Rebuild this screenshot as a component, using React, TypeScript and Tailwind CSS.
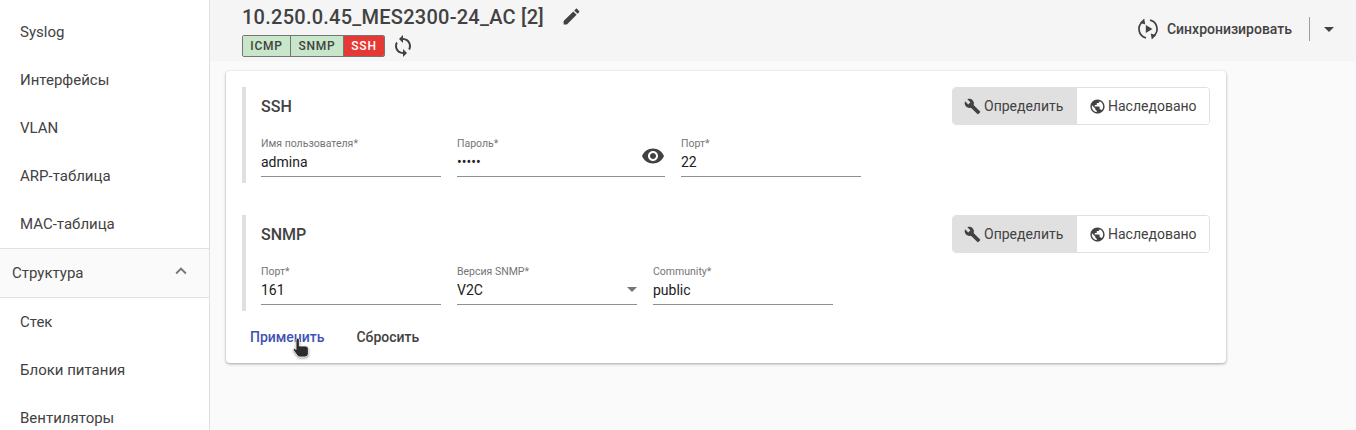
import React from "react";

const MI = ({ d, size = 24, className = "" }: { d: string; size?: number; className?: string }) => (
  <svg width={size} height={size} viewBox="0 0 24 24" fill="currentColor" className={`shrink-0 ${className}`}>
    <path d={d} />
  </svg>
);

const wrench = "M22.7 19l-9.1-9.1c.9-2.3.4-5-1.5-6.9-2-2-5-2.4-7.4-1.3L9 6 6 9 1.6 4.7C.4 7.1.9 10.1 2.9 12.1c1.9 1.9 4.6 2.4 6.9 1.5l9.1 9.1c.4.4 1 .4 1.4 0l2.3-2.3c.5-.4.5-1.1.1-1.4z";
const globe = "M12 2C6.48 2 2 6.48 2 12s4.48 10 10 10 10-4.48 10-10S17.52 2 12 2zm-1 17.93c-3.95-.49-7-3.85-7-7.93 0-.62.08-1.21.21-1.79L9 15v1c0 1.1.9 2 2 2v1.93zm6.9-2.54c-.26-.81-1-1.39-1.9-1.39h-1v-3c0-.55-.45-1-1-1H8v-2h2c.55 0 1-.45 1-1V7h2c1.1 0 2-.9 2-2v-.41c2.93 1.19 5 4.06 5 7.41 0 2.08-.8 3.97-2.1 5.39z";
const edit = "M3 17.25V21h3.75L17.81 9.94l-3.75-3.75L3 17.25zM20.71 7.04c.39-.39.39-1.02 0-1.41l-2.34-2.34c-.39-.39-1.02-.39-1.41 0l-1.83 1.83 3.75 3.75 1.83-1.83z";
const sync = "M12 4V1L8 5l4 4V6c3.31 0 6 2.69 6 6 0 1.01-.25 1.97-.7 2.8l1.46 1.46C19.54 15.03 20 13.57 20 12c0-4.42-3.58-8-8-8zm0 14c-3.31 0-6-2.69-6-6 0-1.01.25-1.97.7-2.8L5.24 7.74C4.46 8.97 4 10.43 4 12c0 4.42 3.58 8 8 8v3l4-4-4-4v3z";
const eye = "M12 4.5C7 4.5 2.73 7.61 1 12c1.73 4.39 6 7.5 11 7.5s9.27-3.11 11-7.5c-1.73-4.39-6-7.5-11-7.5zM12 17c-2.76 0-5-2.24-5-5s2.24-5 5-5 5 2.24 5 5-2.24 5-5 5zm0-8c-1.66 0-3 1.34-3 3s1.34 3 3 3 3-1.34 3-3-1.34-3-3-3z";

const SyncPlay = () => (
  <svg width="24" height="24" viewBox="0 0 24 24" fill="none" className="shrink-0 text-[#424242]">
    <path d="M10 20.8A9 9 0 0 1 6.5 4.9" stroke="currentColor" strokeWidth="1.7" />
    <path d="M14 3.2A9 9 0 0 1 17.5 19.1" stroke="currentColor" strokeWidth="1.7" />
    <path d="M8.2 1.4l1 6-5.2-1.6z" fill="currentColor" />
    <path d="M15.8 22.6l-1-6 5.2 1.6z" fill="currentColor" />
    <path d="M9.8 8v8l6.6-4z" fill="currentColor" />
  </svg>
);

const Toggle = () => (
  <div className="flex h-[38px] rounded border border-[#e0e0e0] text-sm text-[#424242] overflow-hidden">
    <div className="flex w-[124px] items-center gap-[3px] bg-[#e0e0e0] pl-[11px]">
      <MI d={wrench} size={17} className="text-[#424242]" />
      <span>Определить</span>
    </div>
    <div className="flex w-[132px] items-center gap-[2px] bg-white pl-3">
      <MI d={globe} size={17} className="text-[#424242]" />
      <span>Наследовано</span>
    </div>
  </div>
);

const Field = ({ label, value, width, children }: { label: string; value: string; width: string; children?: React.ReactNode }) => (
  <div className={`relative h-[43px] border-b border-[#8f8f8f] ${width}`}>
    <div className="h-[15px] pt-[4px] text-[10.5px] leading-[12px] text-[#757575]">{label}</div>
    <div className="mt-[3px] text-sm leading-[20px] text-[#212121]">{value}</div>
    {children}
  </div>
);

const Section = ({ title, children }: { title: string; children: React.ReactNode }) => (
  <div className="flex h-[96px] flex-col border-l-4 border-[#e0e0e0] pl-[15px]">
    <div className="flex h-[38px] items-start justify-between">
      <div className="mt-[10px] text-base font-medium leading-[20px] text-[#424242]">{title}</div>
      <Toggle />
    </div>
    <div className="mt-[9px] flex gap-4">{children}</div>
  </div>
);

const NavItem = ({ label }: { label: string }) => (
  <div className="flex h-12 items-center pl-5 text-[15px] text-[#424242]">{label}</div>
);

const Badge = ({ label, cls }: { label: string; cls: string }) => (
  <div className={`flex h-5 items-center justify-center border-r border-[#757575] last:border-r-0 text-xs font-medium tracking-[0.8px] ${cls}`}>{label}</div>
);

export default function App() {
  return (
    <div className="relative flex h-[430px] w-[1356px] overflow-hidden bg-[#fafafa] font-['Roboto',sans-serif]">
      <aside className="h-full w-[210px] shrink-0 border-r border-[#e0e0e0] bg-white pt-2">
        <NavItem label="Syslog" />
        <NavItem label="Интерфейсы" />
        <NavItem label="VLAN" />
        <NavItem label="ARP-таблица" />
        <NavItem label="MAC-таблица" />
        <div className="flex h-[50px] items-center justify-between border-y border-[#e0e0e0] bg-[#fafafa] pl-3 pr-[17px] text-[15px] text-[#424242]">
          <span>Структура</span>
          <MI d="M12 8l-6 6 1.41 1.41L12 10.83l4.59 4.58L18 14z" size={22} className="mb-1 text-[#757575]" />
        </div>
        <NavItem label="Стек" />
        <NavItem label="Блоки питания" />
        <NavItem label="Вентиляторы" />
      </aside>
      <main className="min-w-0 flex-1">
        <header className="flex h-[61px] justify-between bg-[#f5f5f5] pl-8 pr-[15px]">
          <div>
            <div className="flex h-[33px] items-center">
              <span className="text-xl font-medium tracking-[0.25px] text-[#424242]">10.250.0.45_MES2300-24_AC [2]</span>
              <MI d={edit} size={21} className="ml-[17px] text-[#424242]" />
            </div>
            <div className="mt-[1px] flex items-center">
              <div className="flex overflow-hidden rounded-[2px] border border-[#757575]">
                <Badge label="ICMP" cls="w-[48px] bg-[#c8e6c9] text-[#424242]" />
                <Badge label="SNMP" cls="w-[53px] bg-[#c8e6c9] text-[#424242]" />
                <Badge label="SSH" cls="w-[40px] bg-[#e53935] text-white" />
              </div>
              <MI d={sync} size={24} className="ml-[6px] text-[#424242]" />
            </div>
          </div>
          <div className="flex h-[58px] items-center">
            <SyncPlay />
            <span className="ml-[7px] text-sm font-medium text-[#424242]">Синхронизировать</span>
            <div className="ml-[17px] h-6 w-px bg-[#9e9e9e]" />
            <MI d="M7 10l5 5 5-5z" size={24} className="ml-[7px] text-[#424242]" />
          </div>
        </header>
        <section className="ml-4 mt-[10px] h-[292px] w-[1000px] rounded bg-white px-4 pt-4 shadow-[0_1px_3px_rgba(0,0,0,0.35)]">
          <Section title="SSH">
            <Field label="Имя пользователя*" value="admina" width="w-[180px]" />
            <Field label="Пароль*" value="•••••" width="w-[208px]">
              <div className="absolute right-0 top-[10px] text-[#424242]">
                <MI d={eye} size={24} />
              </div>
            </Field>
            <Field label="Порт*" value="22" width="w-[180px]" />
          </Section>
          <div className="h-[32px]" />
          <Section title="SNMP">
            <Field label="Порт*" value="161" width="w-[180px]" />
            <Field label="Версия SNMP*" value="V2C" width="w-[180px]">
              <div className="absolute right-[-7px] top-[15px] text-[#757575]">
                <MI d="M7 10l5 5 5-5z" size={24} />
              </div>
            </Field>
            <Field label="Community*" value="public" width="w-[180px]" />
          </Section>
          <div className="mt-2 flex h-9 items-center text-sm font-medium">
            <span className="ml-2 text-[#3f51b5]">Применить</span>
            <span className="ml-8 text-[#424242]">Сбросить</span>
          </div>
        </section>
      </main>
      <svg width="18" height="22" viewBox="0 0 18 22" className="absolute left-[292px] top-[337px] drop-shadow-[0_1px_1px_rgba(0,0,0,0.4)]">
        <path d="M4 3a1.7 1.7 0 0 1 3.4 0V9h6a3 3 0 0 1 3 3v4.5a3.5 3.5 0 0 1-3.5 3.5H8a3.5 3.5 0 0 1-2.8-1.4L1.6 13.5c-.9-1.3.9-2.8 2-1.5l.4.5z" fill="#2b2b2b" stroke="#fff" strokeWidth="0.8" />
      </svg>
    </div>
  );
}
